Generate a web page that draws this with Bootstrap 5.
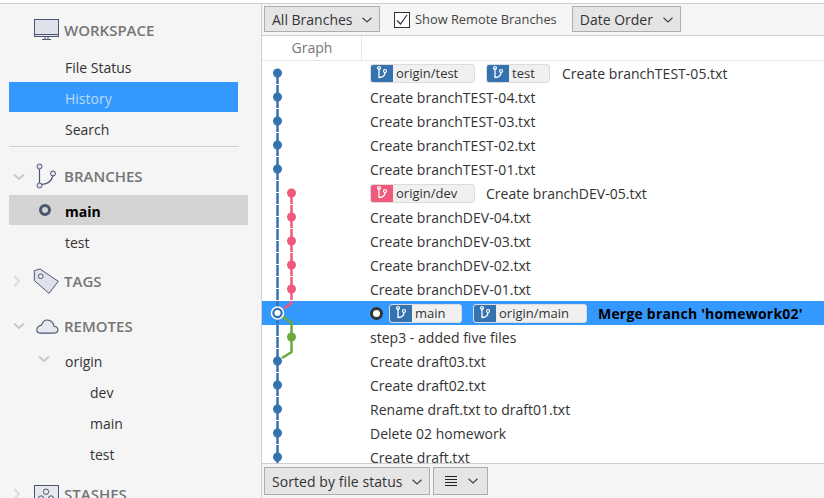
<!DOCTYPE html>
<html lang="en">
<head>
    <meta charset="UTF-8">
    <title>History</title>
    <link href="https://cdn.jsdelivr.net/npm/bootstrap@5.3.0/dist/css/bootstrap.min.css" rel="stylesheet">
    <script src="https://cdn.jsdelivr.net/npm/bootstrap@5.3.0/dist/js/bootstrap.bundle.min.js"></script>
    <style>
        html, body { height: 100%; overflow: hidden; }
        body { font-family: "Open Sans", "Noto Sans", sans-serif; font-size: 14px; color: #333; background: #fff; }
        .app-frame { height: 498px; padding-top: 3px; }
        .app-inner { height: 495px; border-top: 1px solid #cfcfcf; }

        .side-panel { width: 262px; flex: none; background: #f5f5f5; border-right: 1px solid #d0d0d0; overflow: hidden; }
        .side-head { height: 40px; padding-top: 2px; font-size: 15px; font-weight: 600; color: #757575; }
        .head-arrow { width: 32px; padding-left: 13px; flex: none; }
        .head-icon { width: 32px; flex: none; display: flex; justify-content: center; }
        .head-workspace { margin-top: 6px; margin-bottom: 1px; padding-left: 32px; padding-top: 0; }
        .head-branches { margin-top: 8px; padding-top: 3px; }
        .head-tags { margin-top: 5px; padding-top: 0; }
        .head-remotes { margin-top: 4px; }
        .head-stashes { margin-top: 5px; }
        .side-item { height: 30px; padding-top: 2px; margin-bottom: 1px; margin-left: 9px; padding-left: 56px; display: flex; align-items: center; }
        .item-narrow { width: 229px; }
        .item-wide { width: 239px; }
        .item-selected { background: #3399ff; color: #bcd9f5; }
        .item-current { background: #d4d4d4; color: #000; font-weight: 700; position: relative; }
        .current-ring { position: absolute; left: 30px; top: 9px; width: 12px; height: 12px; border: 3px solid #4a5670; border-radius: 50%; }
        .item-leaf { padding-left: 81px; }
        .origin-arrow { position: absolute; left: 29px; top: 10px; }
        .side-rule { width: 230px; margin: 3px 0 0 9px; border-top: 1px solid #cfcfcf; }

        .tool-bar { height: 32px; background: #f5f5f5; border-bottom: 1px solid #cfcfcf; padding: 2px 0 0 2px; flex: none; }
        .tool-btn { height: 26px; padding: 1px 7px 0; border: 1px solid #adadad; background: #e5e5e5; border-radius: 0; font-size: 14px; color: #333; display: flex; align-items: center; justify-content: space-between; }
        .btn-all { width: 116px; }
        .btn-date { width: 109px; margin-left: 15px; }
        .btn-sorted { width: 166px; height: 28px; letter-spacing: .07px; }
        .btn-view { width: 55px; height: 28px; margin-left: 3px; padding: 0 9px 0 11px; }
        .check-box { width: 16px; height: 16px; border: 1px solid #333; background: #fff; margin-left: 14px; margin-right: 5px; display: flex; }
        .check-label { font-size: 12.85px; color: #444; }

        .graph-head { height: 25px; border-bottom: 1px solid #e6e6e6; flex: none; }
        .graph-title { width: 100px; border-right: 1px solid #e6e6e6; text-align: center; padding-left: 1px; color: #777; font-size: 14px; line-height: 24px; }
        .commit-list { flex: 1 1 auto; overflow: hidden; position: relative; }
        .commit-row { height: 24px; padding-left: 108px; display: flex; align-items: center; white-space: nowrap; letter-spacing: .02px; }
        .row-selected { background: #3399ff; color: #000; font-weight: 700; }
        .merge-text { letter-spacing: .2px; }
        .graph-svg { position: absolute; left: 0; top: 0; }
        .head-ring { width: 13px; height: 13px; border: 3px solid #333; background: #fff; border-radius: 50%; margin-right: 6px; flex: none; }
        .ref-tag { height: 19px; display: flex; align-items: stretch; border: 1px solid #dcdcdc; border-radius: 3px; background: #f0f0f0; color: #333; font-size: 13px; font-weight: 400; line-height: 16px; letter-spacing: 0; margin-right: 11px; overflow: hidden; flex: none; }
        .ref-mark { width: 22px; background: #3572b0; display: flex; align-items: center; justify-content: center; margin-right: 3px; flex: none; }
        .ref-pink { background: #f0597a; }
        .w-ref-a { width: 105px; }
        .w-ref-b { width: 64px; margin-right: 12px; }
        .w-ref-c { width: 73px; }
        .w-ref-d { width: 114px; }

        .foot-bar { height: 35px; background: #f5f5f5; border-top: 1px solid #cfcfcf; padding: 3px 0 0 2px; flex: none; }
    </style>
</head>
<body>
    <svg width="0" height="0" class="d-block">
        <symbol id="ref-branch" viewBox="0 0 16 16">
            <path d="M5 3v10M5 12.500c4 0 6-2 6-5.500" fill="none" stroke="#fff" stroke-width="1.300"/>
            <circle cx="5" cy="3" r="1.500" fill="none" stroke="#fff" stroke-width="1.200"/>
            <circle cx="11" cy="6" r="1.500" fill="none" stroke="#fff" stroke-width="1.200"/>
        </symbol>
        <symbol id="arrow-down" viewBox="0 0 12 8">
            <path d="M1 1.500l5 4.500 5-4.500" fill="none" stroke="#c8c8c8" stroke-width="2"/>
        </symbol>
        <symbol id="arrow-right" viewBox="0 0 8 12">
            <path d="M1.500 1l4.500 5-4.500 5" fill="none" stroke="#dcdcdc" stroke-width="2"/>
        </symbol>
        <symbol id="chev-dark" viewBox="0 0 10 6">
            <path d="M.5.700l4.500 4.300 4.500-4.300" fill="none" stroke="#444" stroke-width="1.200"/>
        </symbol>
    </svg>

    <div class="app-frame">
        <div class="app-inner d-flex">
            <div class="side-panel">
                <div class="side-head head-workspace d-flex align-items-center">
                    <div class="head-icon">
                        <svg width="26" height="23" viewBox="1 0 26 23" class="overflow-visible">
                            <rect x=".5" y=".5" width="24" height="17" fill="#dfe2ea" stroke="#4a5670"/>
                            <path d="M1 15.500h23" stroke="#4a5670"/>
                            <path d="M11 18v2M14 18v2M8 20.500h9" stroke="#4a5670"/>
                        </svg>
                    </div>
                    <span>WORKSPACE</span>
                </div>
                <div class="side-item item-narrow">File Status</div>
                <div class="side-item item-narrow item-selected">History</div>
                <div class="side-item item-narrow">Search</div>
                <div class="side-rule"></div>

                <div class="side-head head-branches d-flex align-items-center">
                    <div class="head-arrow"><svg width="12" height="8" class="d-block"><use href="#arrow-down"/></svg></div>
                    <div class="head-icon">
                        <svg width="22" height="26" viewBox="0 0 22 26" class="overflow-visible">
                            <path d="M2.500 5v14M3.500 20.500c6 0 11-3 12.500-9" fill="none" stroke="#4a5670" stroke-width="1.200"/>
                            <circle cx="2.500" cy="2.500" r="2.500" fill="#dfe2ea" stroke="#4a5670"/>
                            <circle cx="2.500" cy="21.500" r="2.500" fill="#dfe2ea" stroke="#4a5670"/>
                            <circle cx="16" cy="9.500" r="2.500" fill="#dfe2ea" stroke="#4a5670"/>
                        </svg>
                    </div>
                    <span>BRANCHES</span>
                </div>
                <div class="side-item item-wide item-current"><span class="current-ring"></span>main</div>
                <div class="side-item item-narrow">test</div>

                <div class="side-head head-tags d-flex align-items-center">
                    <div class="head-arrow"><svg width="8" height="12" class="d-block"><use href="#arrow-right"/></svg></div>
                    <div class="head-icon">
                        <svg width="26" height="26" viewBox="2 0 26 26" class="overflow-visible">
                            <path d="M1.300 2.600L7 1l18.300 12.300L16 25.300 1.300 12.600z" fill="#dfe2ea" stroke="#4a5670" stroke-linejoin="round"/>
                            <circle cx="7.700" cy="8.300" r="2.300" fill="#f5f5f5" stroke="#4a5670"/>
                        </svg>
                    </div>
                    <span>TAGS</span>
                </div>

                <div class="side-head head-remotes d-flex align-items-center">
                    <div class="head-arrow"><svg width="12" height="8" class="d-block"><use href="#arrow-down"/></svg></div>
                    <div class="head-icon">
                        <svg width="23" height="15" viewBox="1.500 0 24 16" class="overflow-visible">
                            <path d="M5 15h14.500c2.500 0 4-1.500 4-3.500s-1.500-3.500-4-3.500c-.5-4-3.500-7-7-7-3 0-5.500 2-6.500 5.500-3 .5-5 3-5 5 0 2 1.500 3.500 4 3.500z" fill="#e6e8ee" stroke="#4a5670" stroke-width="1.200"/>
                        </svg>
                    </div>
                    <span>REMOTES</span>
                </div>
                <div class="side-item item-narrow position-relative">
                    <svg width="12" height="8" class="origin-arrow"><use href="#arrow-down"/></svg>
                    origin
                </div>
                <div class="side-item item-narrow item-leaf">dev</div>
                <div class="side-item item-narrow item-leaf">main</div>
                <div class="side-item item-narrow item-leaf">test</div>

                <div class="side-head head-stashes d-flex align-items-center">
                    <div class="head-arrow"><svg width="8" height="12" class="d-block"><use href="#arrow-right"/></svg></div>
                    <div class="head-icon">
                        <svg width="26" height="26" viewBox="1 -4 26 26" class="overflow-visible">
                            <rect x=".5" y=".5" width="24" height="24" fill="#e6e8ee" stroke="#4a5670"/>
                            <circle cx="12" cy="6.700" r="2.700" fill="none" stroke="#4a5670"/>
                            <circle cx="7" cy="13.500" r="2.700" fill="none" stroke="#4a5670"/>
                            <circle cx="17" cy="13.500" r="2.700" fill="none" stroke="#4a5670"/>
                        </svg>
                    </div>
                    <span>STASHES</span>
                </div>
            </div>

            <div class="flex-grow-1 d-flex flex-column overflow-hidden">
                <div class="tool-bar d-flex align-items-start">
                    <button class="tool-btn btn-all" type="button">All Branches <svg width="10" height="6"><use href="#chev-dark"/></svg></button>
                    <div class="d-flex align-items-center mt-1">
                        <span class="check-box"><svg width="14" height="14" viewBox="0 0 14 14"><path d="M2 7.500l3.500 3.500 6.500-9" fill="none" stroke="#333" stroke-width="1.200"/></svg></span>
                        <span class="check-label">Show Remote Branches</span>
                    </div>
                    <button class="tool-btn btn-date" type="button">Date Order <svg width="10" height="6"><use href="#chev-dark"/></svg></button>
                </div>
                <div class="graph-head d-flex"><div class="graph-title">Graph</div></div>

                <div class="commit-list">
                    <div class="commit-row">
                        <span class="ref-tag w-ref-a"><span class="ref-mark"><svg width="16" height="16"><use href="#ref-branch"/></svg></span>origin/test</span>
                        <span class="ref-tag w-ref-b"><span class="ref-mark"><svg width="16" height="16"><use href="#ref-branch"/></svg></span>test</span>
                        <span>Create branchTEST-05.txt</span>
                    </div>
                    <div class="commit-row">Create branchTEST-04.txt</div>
                    <div class="commit-row">Create branchTEST-03.txt</div>
                    <div class="commit-row">Create branchTEST-02.txt</div>
                    <div class="commit-row">Create branchTEST-01.txt</div>
                    <div class="commit-row">
                        <span class="ref-tag w-ref-a"><span class="ref-mark ref-pink"><svg width="16" height="16"><use href="#ref-branch"/></svg></span>origin/dev</span>
                        <span>Create branchDEV-05.txt</span>
                    </div>
                    <div class="commit-row">Create branchDEV-04.txt</div>
                    <div class="commit-row">Create branchDEV-03.txt</div>
                    <div class="commit-row">Create branchDEV-02.txt</div>
                    <div class="commit-row">Create branchDEV-01.txt</div>
                    <div class="commit-row row-selected">
                        <span class="head-ring"></span>
                        <span class="ref-tag w-ref-c"><span class="ref-mark"><svg width="16" height="16"><use href="#ref-branch"/></svg></span>main</span>
                        <span class="ref-tag w-ref-d"><span class="ref-mark"><svg width="16" height="16"><use href="#ref-branch"/></svg></span>origin/main</span>
                        <span class="merge-text">Merge branch 'homework02'</span>
                    </div>
                    <div class="commit-row">step3 - added five files</div>
                    <div class="commit-row">Create draft03.txt</div>
                    <div class="commit-row">Create draft02.txt</div>
                    <div class="commit-row">Rename draft.txt to draft01.txt</div>
                    <div class="commit-row">Delete 02 homework</div>
                    <div class="commit-row">Create draft.txt</div>

                    <svg class="graph-svg" width="100" height="402" viewBox="0 0 100 402">
                        <path d="M15.500 12V402" fill="none" stroke="#3572b0" stroke-width="2.500" stroke-dasharray="11 1"/>
                        <path d="M29.500 132V242L20 249" fill="none" stroke="#f0597a" stroke-width="2.500" stroke-dasharray="11 1"/>
                        <path d="M20 255L29.500 262V291L20 297" fill="none" stroke="#6aaa3d" stroke-width="2.500"/>
                        <g fill="#3572b0">
                            <circle cx="15.500" cy="12" r="4.500"/><circle cx="15.500" cy="36" r="4.500"/><circle cx="15.500" cy="60" r="4.500"/>
                            <circle cx="15.500" cy="84" r="4.500"/><circle cx="15.500" cy="108" r="4.500"/><circle cx="15.500" cy="300" r="4.500"/>
                            <circle cx="15.500" cy="324" r="4.500"/><circle cx="15.500" cy="348" r="4.500"/><circle cx="15.500" cy="372" r="4.500"/>
                            <circle cx="15.500" cy="396" r="4.500"/>
                        </g>
                        <g fill="#f0597a">
                            <circle cx="29.500" cy="132" r="4.500"/><circle cx="29.500" cy="156" r="4.500"/><circle cx="29.500" cy="180" r="4.500"/>
                            <circle cx="29.500" cy="204" r="4.500"/><circle cx="29.500" cy="228" r="4.500"/>
                        </g>
                        <circle cx="29.500" cy="276" r="4.500" fill="#6aaa3d"/>
                        <circle cx="15.500" cy="252" r="6" fill="#3572b0" stroke="#fff" stroke-width="1.500"/>
                        <circle cx="15.500" cy="252" r="3" fill="#fff"/>
                    </svg>
                </div>

                <div class="foot-bar d-flex align-items-start">
                    <button class="tool-btn btn-sorted" type="button">Sorted by file status <svg width="10" height="6"><use href="#chev-dark"/></svg></button>
                    <button class="tool-btn btn-view" type="button">
                        <svg width="12" height="12" viewBox="0 0 12 12"><path d="M0 1.500h12M0 4.500h12M0 7.500h12M0 10.500h12" stroke="#222" stroke-width="1.200"/></svg>
                        <svg width="10" height="6"><use href="#chev-dark"/></svg>
                    </button>
                </div>
            </div>
        </div>
    </div>
</body>
</html>
